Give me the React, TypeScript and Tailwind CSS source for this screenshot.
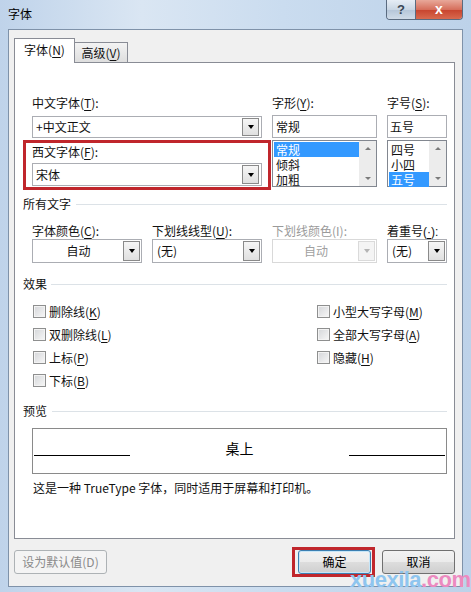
import React from "react";

const U = ({ c }: { c: string }) => <span className="underline underline-offset-[2px]">{c}</span>;

function DropBtn({ disabled }: { disabled?: boolean }) {
  return (
    <div
      className={
        disabled
          ? "w-[17px] h-full flex items-center justify-center border border-[#dadada] bg-[#f4f4f4]"
          : "w-[17px] h-full flex items-center justify-center border border-[#8a8a8a] bg-[linear-gradient(to_bottom,#f6f6f6,#e0e0e0)]"
      }
    >
      <div
        className={
          disabled
            ? "w-0 h-0 border-l-[3.5px] border-r-[3.5px] border-t-[4px] border-l-transparent border-r-transparent border-t-[#b4b4b4]"
            : "w-0 h-0 border-l-[3.5px] border-r-[3.5px] border-t-[4px] border-l-transparent border-r-transparent border-t-black"
        }
      />
    </div>
  );
}

function EditCombo({ text, h }: { text: string; h: string }) {
  return (
    <div className={"w-full border border-[#abadb3] bg-white flex p-px " + h}>
      <div className="flex-1 pl-[2px] leading-[18px] flex items-center">{text}</div>
      <div className="w-[18px]">
        <DropBtn />
      </div>
    </div>
  );
}

function ColorCombo({ text, disabled }: { text: string; disabled?: boolean }) {
  return (
    <div
      className={
        disabled
          ? "w-full h-[24px] border border-[#d9d9d9] bg-white flex p-px"
          : "w-full h-[24px] border border-[#abadb3] bg-white flex p-px"
      }
    >
      <div
        className={
          disabled
            ? "flex-1 flex items-center justify-center text-[#a0a0a0]"
            : "flex-1 flex items-center justify-center"
        }
      >
        {text}
      </div>
      <DropBtn disabled={disabled} />
    </div>
  );
}

function PlainCombo({ text }: { text: string }) {
  return (
    <div className="w-full h-[24px] border border-[#abadb3] bg-white flex p-px">
      <div className="flex-1 flex items-center pl-[3px]">{text}</div>
      <DropBtn />
    </div>
  );
}

function ListBox({ items, sel }: { items: string[]; sel: number }) {
  return (
    <div className="h-[47px] border border-[#828790] bg-white flex">
      <div className="flex-1 pl-px pt-px">
        {items.map((it, i) => (
          <div
            key={it}
            className={
              i === sel
                ? "h-[15px] leading-[15px] bg-[#3399ff] text-white pl-[2px] overflow-hidden"
                : "h-[15px] leading-[15px] pl-[2px] overflow-hidden"
            }
          >
            {it}
          </div>
        ))}
      </div>
      <div className="w-[17px] bg-[#ececec] flex flex-col justify-between items-center py-[6px]">
        <div className="w-0 h-0 border-l-[3px] border-r-[3px] border-b-[3px] border-l-transparent border-r-transparent border-b-[#7a7a7a]" />
        <div className="w-0 h-0 border-l-[3px] border-r-[3px] border-t-[3px] border-l-transparent border-r-transparent border-t-[#7a7a7a]" />
      </div>
    </div>
  );
}

function Group({ title, ml }: { title: string; ml: string }) {
  return (
    <div className="flex items-center h-[16px]">
      <span className="leading-[16px]">{title}</span>
      <div className={"flex-1 h-px bg-[#dce2e7] " + ml} />
    </div>
  );
}

function Check({ children }: { children: React.ReactNode }) {
  return (
    <div className="h-[23px] flex items-center">
      <div className="w-[13px] h-[13px] border border-[#8e8f8f] bg-[linear-gradient(135deg,#d4d6d9,#f7f7f7)] shadow-[inset_0_0_0_1px_#f3f3f3]" />
      <span className="ml-[3px] leading-[16px]">{children}</span>
    </div>
  );
}

function Label({ children, gray }: { children: React.ReactNode; gray?: boolean }) {
  return <div className={gray ? "h-[16px] leading-[16px] text-[#9a9a9a]" : "h-[16px] leading-[16px]"}>{children}</div>;
}

export default function App() {
  return (
    <div className="relative w-[471px] h-[592px] overflow-hidden bg-[linear-gradient(to_right,#bfd3ea,#dae6f3_30%,#cadcef_60%,#bdd2e9)] font-['Noto_Sans_CJK_SC',sans-serif] text-[12px] text-[#111]">
      {/* title bar */}
      <div className="h-[29px] pl-[8px] pt-[6px] leading-[16px] text-black">字体</div>
      <div className="absolute top-0 right-[8px] flex h-[20px] rounded-b-[4px] border border-t-0 border-[#5a6b80] overflow-hidden">
        <div className="w-[29px] h-full flex items-center justify-center bg-[linear-gradient(to_bottom,#e6edf5,#c9d6e4_50%,#b4c5d8_51%,#cfdbe8)] border-r border-[#5a6b80] text-[13px] font-bold text-[#3a4654] font-['Liberation_Sans',sans-serif]">
          ?
        </div>
        <div className="w-[46px] h-full flex items-center justify-center bg-[linear-gradient(to_bottom,#e8a89a,#d66f5c_50%,#c7432d_51%,#d86a4f)] text-white text-[14px] font-bold font-['Liberation_Sans',sans-serif]">
          x
        </div>
      </div>

      {/* client area */}
      <div className="mx-[8px] h-[558px] border border-[#7f92a9] bg-[#f0f0f0] flex flex-col pl-[5px] pr-[7px] pt-[8px]">
        {/* tabs */}
        <div className="h-[24px] flex items-end">
          <div className="relative z-10 -mb-px h-[25px] w-[61px] border border-b-0 border-[#898c95] bg-white flex items-start justify-center pt-[3px] leading-[16px]">
            <span>
              字体(<U c="N" />)
            </span>
          </div>
          <div className="h-[20px] w-[53px] border border-b-0 border-l-0 border-[#898c95] bg-[linear-gradient(to_bottom,#f3f3f3,#dedede)] flex items-center justify-center leading-[16px]">
            <span>
              高级(<U c="V" />)
            </span>
          </div>
        </div>

        {/* panel */}
        <div className="h-[477px] border border-[#898c95] bg-white pl-[8px] pr-[7px] pt-[32px]">
          {/* top fonts */}
          <div className="ml-[9px] grid grid-cols-[230px_105px_60px] gap-x-[10px]">
            <div className="flex flex-col">
              <Label>
                中文字体(<U c="T" />):
              </Label>
              <div className="mt-[5px]">
                <EditCombo text="+中文正文" h="h-[22px]" />
              </div>
              <div className="mt-[6px]">
                <Label>
                  西文字体(<U c="F" />):
                </Label>
              </div>
              <div className="mt-[3px]">
                <EditCombo text="宋体" h="h-[23px]" />
              </div>
            </div>
            <div className="flex flex-col">
              <Label>
                字形(<U c="Y" />):
              </Label>
              <div className="mt-[4px] h-[23px] border border-[#abadb3] bg-white pl-[3px] flex items-center">常规</div>
              <div className="mt-[2px]">
                <ListBox items={["常规", "倾斜", "加粗"]} sel={0} />
              </div>
            </div>
            <div className="flex flex-col">
              <Label>
                字号(<U c="S" />):
              </Label>
              <div className="mt-[4px] h-[23px] border border-[#abadb3] bg-white pl-[2px] flex items-center">五号</div>
              <div className="mt-[2px]">
                <ListBox items={["四号", "小四", "五号"]} sel={2} />
              </div>
            </div>
          </div>

          {/* all text */}
          <div className="mt-[9px]">
            <Group title="所有文字" ml="ml-[5px]" />
          </div>
          <div className="ml-[9px] mt-[11px] grid grid-cols-[110px_110px_105px_60px] gap-x-[10px]">
            <Label>
              字体颜色(<U c="C" />):
            </Label>
            <Label>
              下划线线型(<U c="U" />):
            </Label>
            <Label gray>下划线颜色(I):</Label>
            <Label>
              着重号<span className="font-['Liberation_Sans',sans-serif]">(<U c="·" />):</span>
            </Label>
            <ColorCombo text="自动" />
            <PlainCombo text="(无)" />
            <ColorCombo text="自动" disabled />
            <PlainCombo text="(无)" />
          </div>

          {/* effects */}
          <div className="mt-[13px]">
            <Group title="效果" ml="ml-[4px]" />
          </div>
          <div className="ml-[10px] mt-[8px] flex">
            <div className="w-[284px] flex flex-col">
              <Check>
                删除线(<U c="K" />)
              </Check>
              <Check>
                双删除线(<U c="L" />)
              </Check>
              <Check>
                上标(<U c="P" />)
              </Check>
              <Check>
                下标(<U c="B" />)
              </Check>
            </div>
            <div className="flex flex-col">
              <Check>
                小型大写字母(<U c="M" />)
              </Check>
              <Check>
                全部大写字母(<U c="A" />)
              </Check>
              <Check>
                隐藏(<U c="H" />)
              </Check>
            </div>
          </div>

          {/* preview */}
          <div className="mt-[11px]">
            <Group title="预览" ml="ml-[5px]" />
          </div>
          <div className="ml-[9px] mt-[9px] h-[46px] border border-[#8a8a8a] flex justify-between items-start px-px">
            <div className="mt-[26px] w-[96px] h-px bg-black" />
            <div className="mt-[10px] text-[14px] leading-[18px] text-black">桌上</div>
            <div className="mt-[26px] w-[96px] h-px bg-black" />
          </div>
          <div className="ml-[10px] mt-[6px] leading-[16px]">这是一种 TrueType 字体，同时适用于屏幕和打印机。</div>
        </div>

        {/* buttons */}
        <div className="mt-[11px] h-[24px] flex">
          <div className="w-[93px] h-full rounded-[3px] border border-[#adb2b5] bg-[#f4f4f4] text-[#8a8a8a] flex items-center justify-center">
            设为默认值(D)
          </div>
          <div className="flex-1" />
          <div className="w-[73px] h-full rounded-[3px] border border-[#3c7fb1] bg-[linear-gradient(to_bottom,#f2f2f2,#ebebeb_50%,#dddddd_51%,#cfcfcf)] shadow-[inset_0_0_0_1px_#c7e6f8] flex items-center justify-center text-black">
            确定
          </div>
          <div className="ml-[11px] w-[73px] h-full rounded-[3px] border border-[#707070] bg-[linear-gradient(to_bottom,#f2f2f2,#ebebeb_50%,#dddddd_51%,#cfcfcf)] flex items-center justify-center text-black">
            取消
          </div>
        </div>
      </div>

      {/* annotation overlays */}
      <div className="absolute left-[23px] top-[140px] w-[248px] h-[50px] border-[3px] border-[#c0262c]" />
      <div className="absolute left-[292px] top-[547px] w-[83px] h-[30px] border-[3px] border-[#c0262c]" />

      {/* watermark */}
      <div className="absolute left-[350px] top-[568px] leading-[24px] text-[22px] font-bold font-['Liberation_Sans',sans-serif] tracking-[-0.5px]">
        <span className="text-[#8ec5ef]">xuexila</span>
        <span className="text-[#ec8ac0]">.com</span>
      </div>
    </div>
  );
}
